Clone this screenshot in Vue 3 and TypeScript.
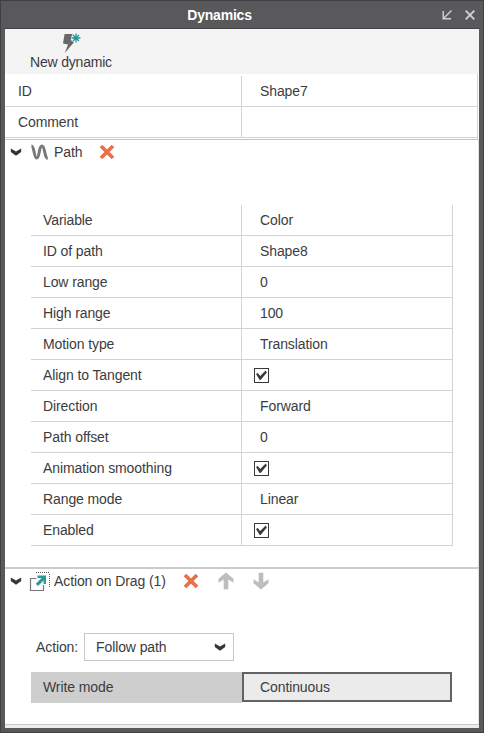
<script setup lang="ts">
import { ref } from 'vue'

interface Row {
  label: string
  value: string | boolean
}

const general: Row[] = [
  { label: 'ID', value: 'Shape7' },
  { label: 'Comment', value: '' },
]

const pathRows = ref<Row[]>([
  { label: 'Variable', value: 'Color' },
  { label: 'ID of path', value: 'Shape8' },
  { label: 'Low range', value: '0' },
  { label: 'High range', value: '100' },
  { label: 'Motion type', value: 'Translation' },
  { label: 'Align to Tangent', value: true },
  { label: 'Direction', value: 'Forward' },
  { label: 'Path offset', value: '0' },
  { label: 'Animation smoothing', value: true },
  { label: 'Range mode', value: 'Linear' },
  { label: 'Enabled', value: true },
])

function toggle(row: Row) {
  if (typeof row.value === 'boolean') row.value = !row.value
}
</script>

<template>
  <div class="window">
    <header class="titlebar">
      <span class="title">Dynamics</span>
      <svg class="t-icon" width="12" height="12" viewBox="0 0 12 12">
        <path d="M10.5 1.5L2.5 9.5M2.2 2V9.8H10" />
      </svg>
      <svg class="t-icon close" width="12" height="12" viewBox="0 0 12 12">
        <path d="M1.7 1.7L10.3 10.3M10.3 1.7L1.7 10.3" />
      </svg>
    </header>

    <main class="content">
      <div class="toolbar">
        <button class="new-btn">
          <svg width="20" height="22" viewBox="0 0 20 22">
            <path d="M3.6 2H12L9.6 8.2L13.6 9.4L3.8 21L7 12.6L2 11.4Z" fill="#68686a" />
            <circle cx="15" cy="6" r="4.8" fill="#f4f4f4" />
            <path d="M15 1.6V10.4M10.6 6H19.4M12 3L18 9M18 3L12 9" stroke="#23969b" stroke-width="1.3" />
          </svg>
          <span>New dynamic</span>
        </button>
      </div>

      <div class="grid general">
        <div v-for="row in general" :key="row.label" class="row">
          <div class="label">{{ row.label }}</div>
          <div class="value">{{ row.value }}</div>
        </div>
      </div>

      <section class="path-section">
        <div class="head">
          <svg class="chevron" width="12" height="8" viewBox="0 0 12 8"><path d="M.8 .6L6 3.6L11.2 .6V4L6 7.8L.8 4Z" /></svg>
          <svg class="wave" width="20" height="18" viewBox="0 0 20 18">
            <path d="M1.4 3C4.4 3 3.8 15 6.7 15C9.7 15 8.7 3 12 3C15.2 3 14.2 15.3 17.8 15.3" />
          </svg>
          <span>Path</span>
          <svg class="remove" width="18" height="18" viewBox="0 0 18 18"><path d="M3 3L15 15M15 3L3 15" /></svg>
        </div>
        <div class="grid props">
          <div v-for="row in pathRows" :key="row.label" class="row">
            <div class="label">{{ row.label }}</div>
            <div v-if="typeof row.value === 'boolean'" class="value checks" @click="toggle(row)">
              <span class="box">
                <svg v-if="row.value" width="13" height="13" viewBox="0 0 13 13"><path d="M1 5L2.8 4L5.2 6.9L10.7 1.6L11.9 3.6L5.6 10.9H4.7Z" /></svg>
              </span>
            </div>
            <div v-else class="value">{{ row.value }}</div>
          </div>
        </div>
      </section>

      <section class="drag-section">
        <div class="head">
          <svg class="chevron" width="12" height="8" viewBox="0 0 12 8"><path d="M.8 .6L6 3.6L11.2 .6V4L6 7.8L.8 4Z" /></svg>
          <svg class="drag" width="22" height="21" viewBox="0 0 22 21" fill="none">
            <path d="M7 1.5H20" stroke="#57575a" stroke-dasharray="1 1" />
            <path d="M20.5 3V16" stroke="#57575a" stroke-dasharray="1 1" />
            <path d="M7.5 7.5H1.5V19.5H14.5V14" stroke="#77777a" stroke-width="1.2" />
            <path d="M8.5 4.5H17V13H14.6V9.4L9 15L6.8 12.8L12.6 7H8.5Z" fill="#269b9b" />
          </svg>
          <span>Action on Drag (1)</span>
          <svg class="remove" width="18" height="18" viewBox="0 0 18 18"><path d="M3 3L15 15M15 3L3 15" /></svg>
          <svg class="move" width="18" height="18" viewBox="0 0 18 18"><path d="M9 .5L16.5 6.8V10.8L11.3 7.5V17.3H6.7V7.5L1.5 10.8V6.8Z" /></svg>
          <svg class="move down" width="18" height="18" viewBox="0 0 18 18"><path d="M9 17.5L16.5 11.2V7.2L11.3 10.5V.7H6.7V10.5L1.5 7.2V11.2Z" /></svg>
        </div>
        <div class="action">
          <span>Action:</span>
          <div class="select">
            <span>Follow path</span>
            <svg class="chevron" width="12" height="8" viewBox="0 0 12 8"><path d="M.8 .6L6 3.6L11.2 .6V4L6 7.8L.8 4Z" /></svg>
          </div>
        </div>
        <div class="mode">
          <div class="mode-label">Write mode</div>
          <div class="mode-value">Continuous</div>
        </div>
      </section>
      <div class="foot"></div>
    </main>
  </div>
</template>

<style>
body {
  margin: 0;
}
</style>

<style scoped>
.window {
  box-sizing: border-box;
  width: 484px;
  height: 733px;
  padding: 0 4px 4px;
  border: 1px solid #404042;
  background: #59595b;
  font: 14px/18px "Liberation Sans", Arial, sans-serif;
  letter-spacing: -0.1px;
  color: #3c3c3e;
}
.titlebar {
  box-sizing: border-box;
  height: 28px;
  display: flex;
  align-items: center;
  border-bottom: 1px solid #424244;
  padding-right: 3px;
}
.title {
  flex: 1;
  margin-right: 7px;
  text-align: center;
  font-weight: bold;
  letter-spacing: -0.2px;
  color: #fff;
}
.t-icon {
  fill: none;
  stroke: #d2d2d3;
  stroke-width: 1.4;
}
.t-icon.close {
  margin-left: 11px;
  stroke-width: 1.9;
}
.content {
  height: 699px;
  width: 474px;
  display: flex;
  flex-direction: column;
  background: #fff;
}
.toolbar {
  flex: none;
  height: 45px;
  background: #f4f4f4;
}
.new-btn {
  display: flex;
  flex-direction: column;
  align-items: center;
  width: 82px;
  margin-left: 25px;
  padding: 3px 0 0;
  border: 0;
  background: none;
  font: inherit;
  line-height: 16px;
  letter-spacing: -0.2px;
  color: inherit;
  white-space: nowrap;
}
.row {
  box-sizing: border-box;
  display: flex;
  align-items: center;
  height: 31px;
  border-bottom: 1px solid #d2d4d4;
}
.label,
.value {
  display: flex;
  align-items: center;
  height: 30px;
}
.label {
  box-sizing: border-box;
  border-right: 1px solid #d2d4d4;
}
.value {
  padding-left: 18px;
}
.general {
  flex: none;
  height: 65px;
  box-sizing: border-box;
  width: 473px;
  padding-top: 2px;
  border-right: 1px solid #d2d4d4;
}
.general .label {
  width: 237px;
  padding-left: 13px;
}
.path-section,
.drag-section {
  box-sizing: border-box;
  flex: none;
  border-right: 1px solid #e2e2e2;
}
.path-section {
  height: 428px;
  border-top: 1px solid #c4c4c4;
}
.head {
  display: flex;
  align-items: center;
  height: 24px;
  padding-left: 5px;
}
.chevron {
  fill: #353538;
}
.wave {
  margin: 0 4px 0 8px;
  fill: none;
  stroke: #77797b;
  stroke-width: 3;
}
.remove {
  margin-left: 16px;
  fill: none;
  stroke: #ea704d;
  stroke-width: 3.8;
}
.props {
  box-sizing: border-box;
  width: 422px;
  margin: 41px 0 0 26px;
  border-right: 1px solid #d2d4d4;
}
.props .label {
  width: 211px;
  padding-left: 12px;
}
.value.checks {
  padding-left: 12px;
}
.box {
  width: 13px;
  height: 13px;
  border: 1px solid #39393b;
}
.box svg {
  display: block;
  fill: #39393b;
}
.drag-section {
  height: 157px;
  border-top: 2px solid #cbcbcb;
}
.drag {
  margin: 0 3px 0 7px;
}
.move {
  margin-left: 17px;
  fill: #bdbdbf;
}
.action {
  display: flex;
  align-items: center;
  margin: 40px 0 0 31px;
}
.action > span {
  width: 42px;
}
.select {
  box-sizing: border-box;
  display: flex;
  align-items: center;
  justify-content: space-between;
  width: 150px;
  height: 28px;
  margin-left: 6px;
  padding: 0 7px 0 11px;
  border: 1px solid #c8c8ca;
}
.mode {
  display: flex;
  width: 421px;
  height: 31px;
  margin: 11px 0 0 26px;
}
.mode-label {
  box-sizing: border-box;
  width: 211px;
  padding-left: 12px;
  line-height: 31px;
  background: #cecece;
}
.mode-value {
  box-sizing: border-box;
  width: 210px;
  height: 30px;
  padding-left: 16px;
  line-height: 27px;
  border: 2px solid #636363;
  background: #ebebeb;
}
.foot {
  flex: 1;
  border-top: 1px solid #c8c8c8;
  background: #ededed;
}
</style>
